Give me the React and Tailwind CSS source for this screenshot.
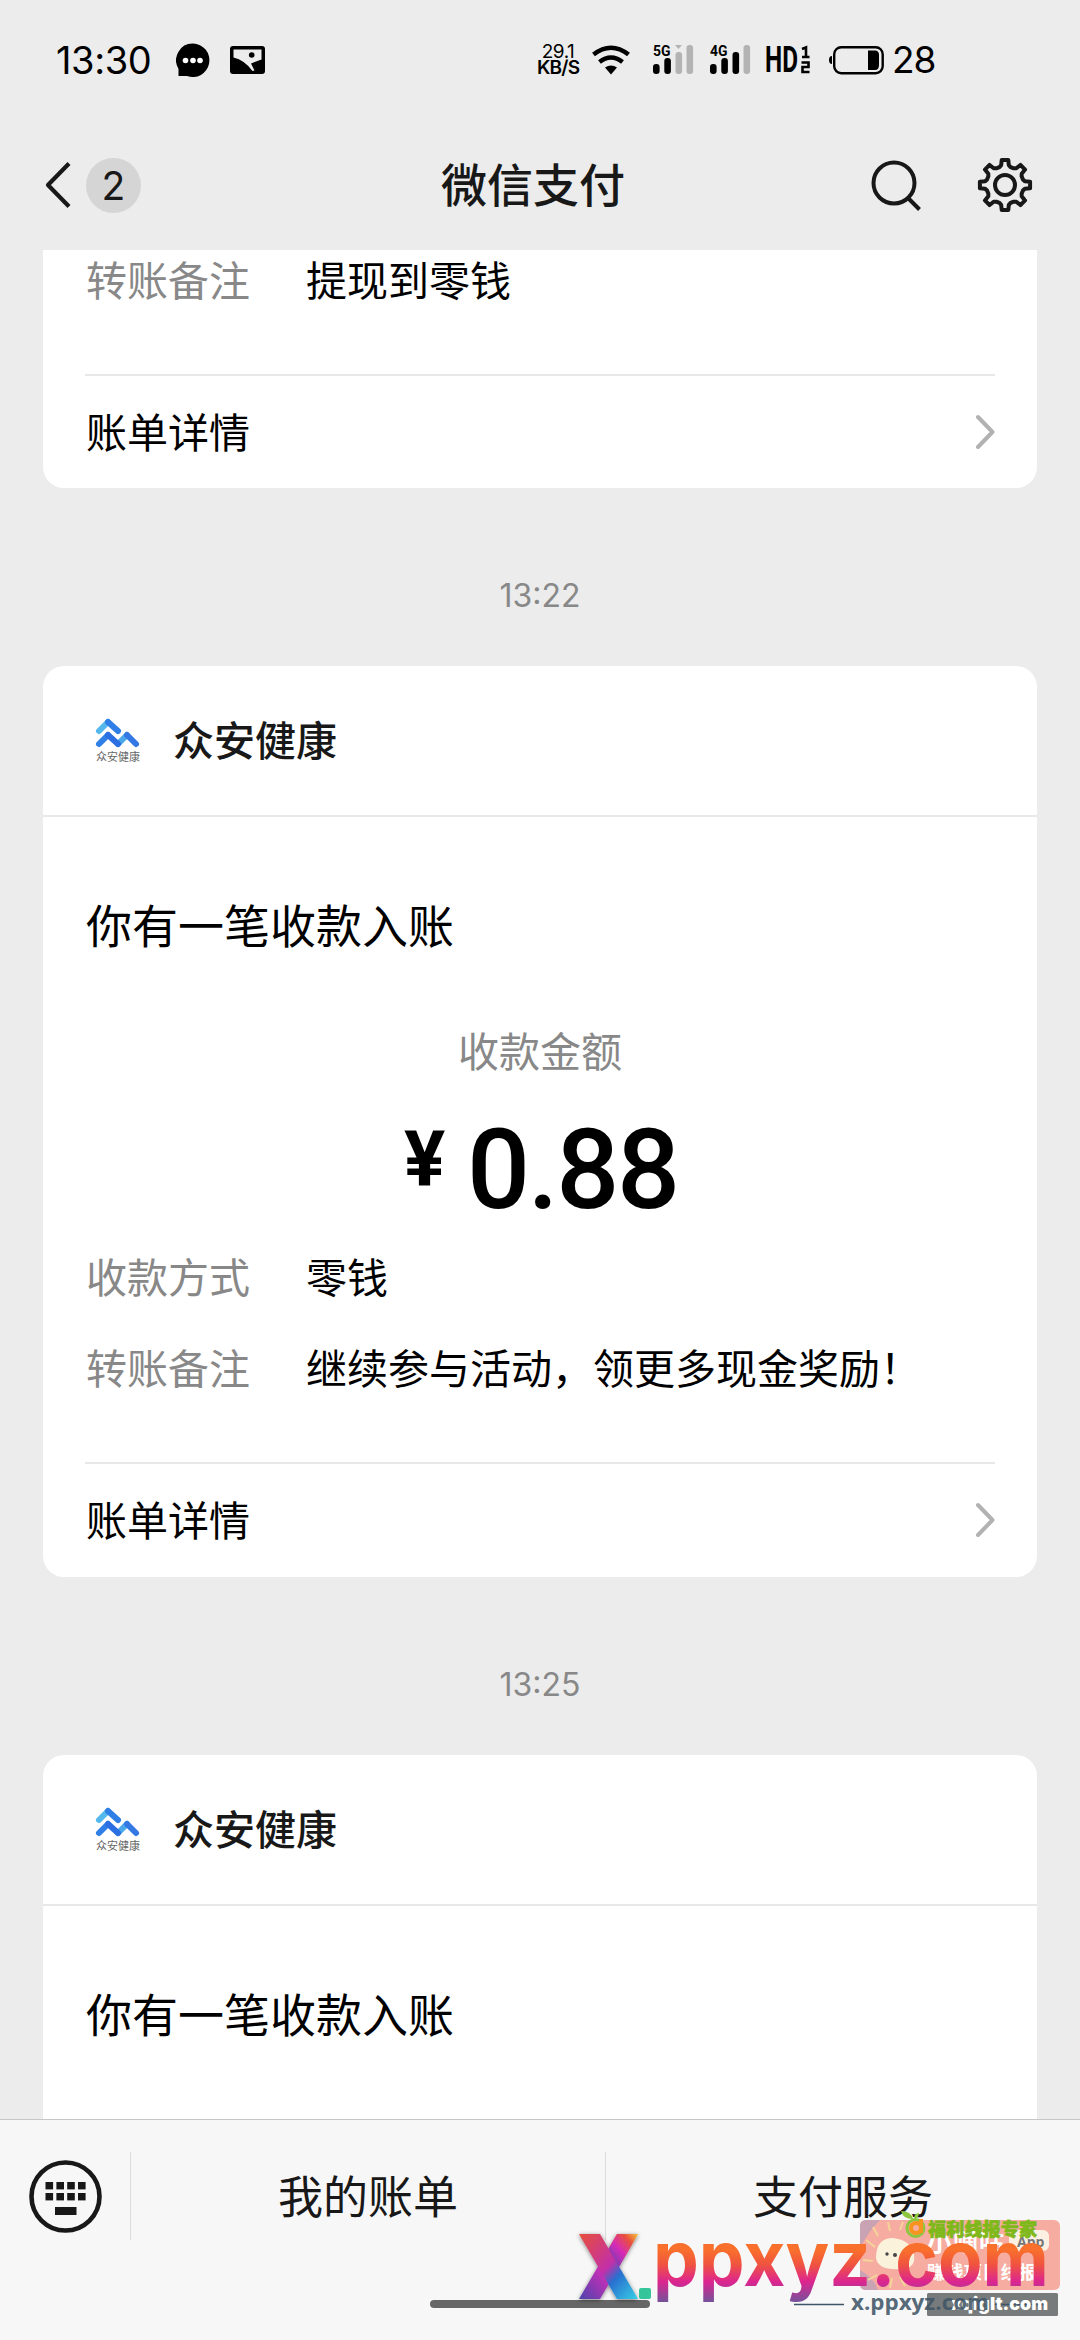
function Chevron() {
  return (
    <svg width="20" height="38" viewBox="2 0 20 38" fill="none" stroke="#b2b2b2" strokeWidth="4" strokeLinecap="round" strokeLinejoin="round">
      <path d="M5 4 L19.500 19 L5 34" />
    </svg>
  );
}

function StatusBar() {
  return (
    <div className="flex h-[120px] items-center pl-[56px] font-['Inter','Noto_Sans_CJK_SC',sans-serif] text-black">
      <div className="w-[120px] text-[38px] leading-[40px] tracking-[-0.4px]">13:30</div>
      <svg width="34" height="36" viewBox="0 0 34 36">
        <path d="M17 1.5 A16.5 16.8 0 1 1 11 34 H2.5 V27 A16.5 16.8 0 0 1 17 1.5Z" fill="#000" />
        <circle cx="9.5" cy="18.5" r="2.8" fill="#fff" />
        <circle cx="17" cy="18.5" r="2.8" fill="#fff" />
        <circle cx="24" cy="18.5" r="2.8" fill="#fff" />
      </svg>
      <svg className="ml-5" width="35" height="28" viewBox="0 0 35 28">
        <rect width="35" height="28" rx="3" fill="#000" />
        <path d="M3.5 3.5 H31.5 V13.5 L21 17.5 L24.5 24.5 L22.5 25 Q14.5 14 3.5 11.5Z" fill="#ececec" />
        <circle cx="21.7" cy="9" r="2.8" fill="#000" />
      </svg>
      <div className="ml-[272px] w-[42px] text-center text-[19px] leading-[16px] tracking-[-0.5px]">
        <div>29.1</div>
        <div className="font-semibold tracking-[-0.8px]">KB/S</div>
      </div>
      <svg className="ml-[13px]" width="38" height="30" viewBox="0 0 38 30" fill="none" stroke="#000" strokeWidth="4.6">
        <path d="M1.5 9.5 Q19 -4 36.500 9.500" />
        <path d="M7.500 17 Q19 8 30.500 17" />
        <path d="M13 22.500 Q19 18.500 25 22.500 L19 29.500Z" fill="#000" stroke="none" />
      </svg>
      <Signal label="5G" className="ml-[23px] overflow-visible" levels={2} notch />
      <Signal label="4G" className="ml-[16px] overflow-visible" levels={3} />
      <svg className="ml-[14px] overflow-visible" width="46" height="30" viewBox="0 0 46 30">
        <text x="0" y="27" fontSize="36" fontWeight="700" fontFamily="Roboto" textLength="33" lengthAdjust="spacingAndGlyphs">HD</text>
        <g fill="none" stroke="#000" strokeWidth="2.600">
          <path d="M37 4 L41 2.500 V12 M37 12 H44.500" />
          <path d="M36.500 17.500 H43.500 V22 H37.500 V27 H44.500" />
        </g>
      </svg>
      <svg className="ml-[17px]" width="56" height="30" viewBox="0 0 56 30">
        <path d="M4 11 Q1 11 1 15 Q1 19 4 19Z" fill="#000" />
        <rect x="6.200" y="2.200" width="48.500" height="26" rx="7" fill="none" stroke="#000" strokeWidth="2.400" />
        <path d="M40 5.500 H47 Q51 5.500 51 10 V20 Q51 25 47 25 H40Z" fill="#000" />
      </svg>
      <div className="ml-[8px] text-[37px] leading-[40px] tracking-[-1px]">28</div>
    </div>
  );
}

function Signal({ label, levels, notch, className }) {
  const bars = [[0, 20, 10], [11.3, 14, 16], [22.5, 8, 22], [33.5, 1, 29]];
  return (
    <svg className={className} width="41" height="32" viewBox="0 0 41 32">
      <text x="0" y="12" fontSize="15" fontWeight="700" fontFamily="Roboto" textLength="17.500" lengthAdjust="spacingAndGlyphs">{label}</text>
      {bars.map(([x, y, h], i) => (
        <rect key={x} x={x} y={y} width="6.600" height={h} rx="3" fill={i < levels ? '#000' : '#b3b3b3'} />
      ))}
      {notch && <path d="M22 1 H29 L25.500 5Z" fill="#b3b3b3" />}
    </svg>
  );
}

const gearPath = (() => {
  const pts = [];
  for (let i = 0; i < 8; i++) {
    const a = (i * Math.PI) / 4;
    [[-0.3, 18.8], [-0.19, 20.2], [-0.13, 25.3], [0.13, 25.3], [0.19, 20.2], [0.3, 18.8]].forEach(([d, r]) =>
      pts.push(`${(28 + r * Math.sin(a + d)).toFixed(2)} ${(28 - r * Math.cos(a + d)).toFixed(2)}`)
    );
  }
  return `M${pts.join('L')}Z`;
})();

function NavBar() {
  return (
    <div className="flex h-[130px] items-center pl-[44px] text-[#181818]">
      <svg width="28" height="50" viewBox="0 0 28 50" fill="none" stroke="#181818" strokeWidth="4.200" strokeLinejoin="round">
        <path d="M25 3.500 L4 25 L25 46.500" />
      </svg>
      <div className="ml-[14px] flex size-[55px] items-center justify-center rounded-full bg-[#d5d5d5] font-['Inter'] text-[39px] leading-none">2</div>
      <div className="ml-[300px] w-[184px] pb-[7px] text-[46px] font-medium leading-[60px]">微信支付</div>
      <svg className="ml-[244px]" width="54" height="54" viewBox="0 0 54 54" fill="none" stroke="#181818" strokeWidth="4">
        <circle cx="25" cy="25" r="20.500" />
        <path d="M39 40 L50.500 51.500" />
      </svg>
      <svg className="ml-[54px]" width="56" height="56" viewBox="0 0 56 56" fill="none" stroke="#181818" strokeWidth="4" strokeLinejoin="round">
        <path d={gearPath} />
        <circle cx="28" cy="28" r="10" />
      </svg>
    </div>
  );
}

function Field({ label, value }) {
  return (
    <div className="flex h-[91px] shrink-0 items-center pb-[5px] pl-[43px] text-[41px] leading-[60px]">
      <div className="w-[220px] text-[#888]">{label}</div>
      <div className="text-black">{value}</div>
    </div>
  );
}

function BillLink() {
  return (
    <div className="mx-[42px] flex h-[114px] shrink-0 items-center justify-between border-t-2 border-[#e8e8e8] pl-px text-[41px] leading-[60px] text-black">
      <span className="pb-[5px]">账单详情</span>
      <Chevron />
    </div>
  );
}

function BrandLogo() {
  return (
    <svg width="48" height="48" viewBox="0 0 48 48" fill="none" strokeLinecap="round" strokeWidth="6">
      <path d="M5 14 L14 5" stroke="#55b8ec" />
      <path d="M14 5 L24 14" stroke="#2f7fe6" />
      <path d="M5 27 L14 18" stroke="#2f7fe6" />
      <path d="M24 27 L33 18" stroke="#4aa8ea" />
      <path d="M14 18 L24 27" stroke="#2b6fe2" />
      <path d="M33 18 L42 27" stroke="#3478e4" />
      <text x="2" y="44" fontSize="11" fill="#666" stroke="none">众安健康</text>
    </svg>
  );
}

function CardHead() {
  return (
    <>
      <div className="flex h-[151px] items-center border-b-2 border-[#e8e8e8] pl-[51px]">
        <BrandLogo />
        <span className="ml-[31px] pb-[5px] text-[41px] font-medium leading-[60px] text-[#181818]">众安健康</span>
      </div>
      <div className="mt-[76px] pl-[43px] text-[46px] leading-[60px] text-black">你有一笔收款入账</div>
    </>
  );
}

function Time({ children }) {
  return (
    <div className="h-[178px] pt-[88px] text-center font-['Inter'] text-[32px] leading-[40px] text-[#888]">{children}</div>
  );
}

function Messages() {
  return (
    <div className="h-[1869px] overflow-hidden px-[43px]">
      <section className="flex h-[238px] flex-col justify-end rounded-b-[21px] bg-white">
        <Field label="转账备注" value="提现到零钱" />
        <div className="h-[48px] shrink-0" />
        <BillLink />
      </section>
      <Time>13:22</Time>
      <section className="h-[911px] rounded-[21px] bg-white">
        <CardHead />
        <div className="mt-[66px] text-center text-[41px] leading-[60px] text-[#888]">收款金额</div>
        <div className="mt-[38px] flex h-[115px] items-start pl-[361px] font-['Roboto'] font-medium text-black">
          <span className="w-[63px] pt-[10px] text-[77px] font-bold leading-[66px]">¥</span>
          <span className="text-[111px] leading-[106px] tracking-[-2.3px]">0.88</span>
        </div>
        <Field label="收款方式" value="零钱" />
        <Field label="转账备注" value="继续参与活动，领更多现金奖励！" />
        <div className="h-[48px]" />
        <BillLink />
      </section>
      <Time>13:25</Time>
      <section className="h-[600px] rounded-t-[21px] bg-white">
        <CardHead />
      </section>
    </div>
  );
}

function Watermark() {
  return (
    <svg className="absolute bottom-0 right-0" width="510" height="130" viewBox="570 2210 510 130">
      <defs>
        <linearGradient id="word" x1="0" y1="2244" x2="0" y2="2302" gradientUnits="userSpaceOnUse">
          <stop offset="0.1" stopColor="#f9702c" />
          <stop offset="0.350" stopColor="#f0543f" />
          <stop offset="0.650" stopColor="#dc2590" />
          <stop offset="1" stopColor="#74529a" />
        </linearGradient>
        <linearGradient id="xa" x1="0" y1="0" x2="1" y2="1">
          <stop offset="0" stopColor="#e8503a" />
          <stop offset="0.500" stopColor="#c22fa8" />
          <stop offset="0.650" stopColor="#2a6fd0" />
          <stop offset="1" stopColor="#35d0e4" />
        </linearGradient>
        <linearGradient id="xb" x1="1" y1="0" x2="0" y2="1">
          <stop offset="0" stopColor="#f4c63c" />
          <stop offset="0.250" stopColor="#e9503c" />
          <stop offset="0.550" stopColor="#d62bb8" />
          <stop offset="1" stopColor="#4b44ac" />
        </linearGradient>
        <filter id="soft" x="-20%" y="-20%" width="140%" height="140%">
          <feDropShadow dx="0" dy="1" stdDeviation="2" floodColor="#000" floodOpacity="0.500" />
        </filter>
      </defs>
      <rect x="860" y="2220" width="200" height="70" rx="6" fill="#f6aca0" />
      <path d="M860 2226 q0 -6 6 -6 h14 q-12 12 -20 28Z M860 2270 q14 8 18 20 h-12 q-6 0 -6 -6Z" fill="#c9a3b4" />
      <path d="M866 2240 l9 7 M873 2227 l5 9 M888 2222 l2 9 M903 2222 l-3 8 M863 2260 l10 1 M868 2280 l9 -5 M890 2288 l2 -10 M905 2286 l-5 -9" stroke="#f5d49a" strokeWidth="2" />
      <path d="M876 2258 Q876 2238 893 2238 Q911 2240 914 2255 Q916 2268 902 2269 Q878 2271 876 2258Z" fill="#fbf2dc" />
      <g fill="#444"><circle cx="887" cy="2254" r="1.700" /><circle cx="895" cy="2255" r="2" /></g>
      <g fill="#fff" fontWeight="700">
        <text x="927" y="2251" fontSize="25" textLength="77">小嘀咕</text>
        <text x="927" y="2279" fontSize="18" textLength="110">赚钱项目线报</text>
      </g>
      <rect x="1009" y="2230" width="40" height="21" rx="6" fill="#fbf0e2" />
      <text x="1017" y="2247" fontSize="14" fontWeight="700" fontFamily="Open Sans" fill="#777">App</text>
      <circle cx="915.500" cy="2228" r="8.500" fill="none" stroke="#8cc63f" strokeWidth="3" />
      <circle cx="916" cy="2228" r="5" fill="none" stroke="#f7941d" strokeWidth="4" />
      <path d="M921 2219 V2233" stroke="#f7941d" strokeWidth="4" />
      <path d="M913 2219 Q903 2219 901 2211 Q911 2211 913 2219Z M914 2219 Q914 2213 919 2213 Q919 2218 914 2219Z" fill="#8cc63f" />
      <text x="928" y="2236" fontSize="18" fontWeight="900" fill="#7fb81a" stroke="#7fb81a" strokeWidth="0.700" textLength="109">福利线报专家</text>
      <rect x="927" y="2293" width="131" height="23" rx="1.500" fill="#777b7b" />
      <path d="M794 2304.500 H844 M994 2304.500 H1046" stroke="#3f5668" strokeWidth="1.500" />
      <text x="951" y="2310" fontSize="18" fontWeight="900" fontFamily="Inter" fill="#fff" textLength="97" lengthAdjust="spacingAndGlyphs">xqiglt.com</text>
      <text x="851" y="2310" fontSize="21" fontWeight="700" fontFamily="Open Sans" fill="#3f5668" fillOpacity="0.900" textLength="138" lengthAdjust="spacingAndGlyphs">x.ppxyz.com</text>
      <g filter="url(#soft)">
        <path d="M617 2234 H638 L600 2299 H579Z" fill="url(#xb)" />
        <path d="M579 2234 H600 L638 2299 H617Z" fill="url(#xa)" />
        <path d="M617 2234 H638 L619 2267 L608.500 2249Z" fill="url(#xb)" />
      </g>
      <rect x="639" y="2288" width="12" height="11" rx="2" fill="#35c59b" />
      <text x="653" y="2286" fontSize="77" fontWeight="700" fontFamily="Inter" fill="url(#word)" textLength="396" lengthAdjust="spacingAndGlyphs">ppxyz.com</text>
    </svg>
  );
}

function BottomBar() {
  return (
    <div className="relative h-[221px] border-t border-[#c6c6c6] bg-[#f7f7f7] pt-[32px]">
      <div className="flex h-[88px] items-center text-[45px] leading-[60px] text-[#181818]">
        <div className="flex h-full w-[131px] items-center border-r border-[#dcdcdc] pl-[28px]">
          <svg width="75" height="75" viewBox="0 0 75 75">
            <circle cx="37.500" cy="37.500" r="34" fill="none" stroke="#181818" strokeWidth="4.600" />
            <g fill="#181818">
              {[17.5, 28.4, 39.2, 50].map((x) => (
                <g key={x}>
                  <rect x={x} y="23" width="7.600" height="7.400" />
                  <rect x={x} y="34" width="7.600" height="7.400" />
                </g>
              ))}
              <rect x="27" y="48" width="21.500" height="8" />
            </g>
          </svg>
        </div>
        <div className="flex h-full w-[475px] items-center justify-center border-r border-[#dcdcdc] pb-[3px]">我的账单</div>
        <div className="flex-1 pb-[3px] text-center">支付服务</div>
      </div>
      <div className="mx-auto mt-[60px] h-2 w-[220px] rounded-full bg-[#666]" />
      <Watermark />
    </div>
  );
}

export default function App() {
  return (
    <main className="h-[2340px] w-[1080px] overflow-hidden bg-[#ececec] font-['Noto_Sans_CJK_SC',sans-serif]">
      <StatusBar />
      <NavBar />
      <Messages />
      <BottomBar />
    </main>
  );
}
